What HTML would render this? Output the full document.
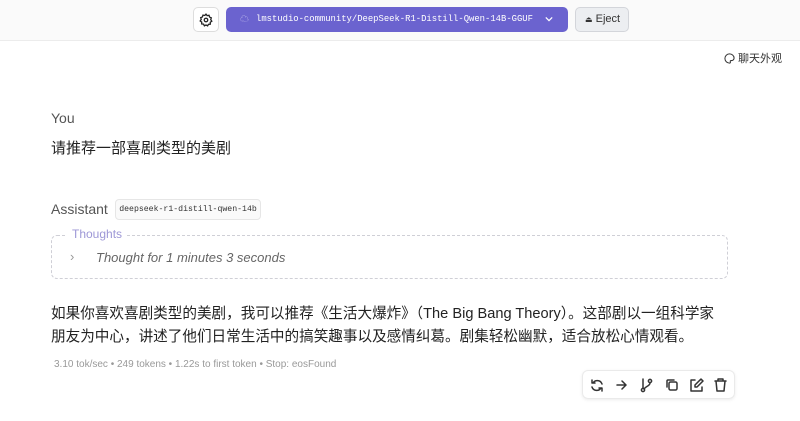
<!DOCTYPE html>
<html><head><meta charset="utf-8"><style>
body{margin:0;width:800px;height:421px;overflow:hidden;background:#fff;font-family:"Liberation Sans","Noto Sans CJK SC",sans-serif;position:relative;color:#222}
.top{position:absolute;left:0;top:0;width:800px;height:40px;background:#fafafa;border-bottom:1px solid #ececec}
.abs{position:absolute;white-space:nowrap}
.btn{position:absolute;border:1px solid #ddd;border-radius:5px;background:#fff;box-sizing:border-box}
.mono{font-family:"Liberation Mono","DejaVu Sans Mono",monospace}
</style></head><body>
<div class="top"></div>
<div class="btn" style="left:193px;top:7px;width:26px;height:25px;display:flex;align-items:center;justify-content:center">
<svg width="14" height="14" viewBox="0 0 24 24" fill="none" stroke="#222" stroke-width="2.2"><circle cx="12" cy="12" r="3"/><path d="M12 2l2 2.5 3.2-.6.9 3.1 3 1.3-1 3 1.9 2.7-2.7 1.9.1 3.2-3.2.3L14.8 22 12 20.5 9.2 22l-1.4-2.9-3.2-.3.1-3.2L2 13.7 3.9 11 2.9 8l3-1.3.9-3.1 3.2.6z"/></svg></div>
<div class="abs" style="left:226px;top:7px;width:342px;height:25px;background:#6b63cf;border-radius:5px;color:#fff;font-size:8.9px;line-height:25px" >
<span style="position:absolute;left:14px;top:0;font-size:9px;color:#c9c4f0">☁</span>
<span class="mono" style="position:absolute;left:30px">lmstudio-community/DeepSeek-R1-Distill-Qwen-14B-GGUF</span>
<svg class="abs" style="left:319px;top:9px" width="8" height="6" viewBox="0 0 10 6" fill="none" stroke="#fff" stroke-width="1.5"><path d="M1 1l4 4 4-4"/></svg>
</div>
<div class="btn" style="left:575px;top:7px;width:54px;height:25px;background:#eceef1;border-color:#d3d5da;font-size:11px;line-height:23px;color:#333;padding-left:9px"><span style="font-size:8px">⏏</span> Eject</div>
<div class="abs" style="left:724px;top:50px;font-size:11px;color:#333">
<svg style="vertical-align:-2px" width="11" height="11" viewBox="0 0 24 24" fill="none" stroke="#333" stroke-width="2.2"><path d="M12 2a10 10 0 100 20c1.5 0 2-1 2-2 0-1.5-1-2 0-3 1-1 3 0 5-1 2-1 3-3 3-5 0-5-4.5-9-10-9z"/></svg> 聊天外观</div>
<div class="abs" style="left:51px;top:110px;font-size:14px;color:#555">You</div>
<div class="abs" style="left:51px;top:137px;font-size:15px;color:#222">请推荐一部喜剧类型的美剧</div>
<div class="abs" style="left:51px;top:201px;font-size:14px;color:#555">Assistant</div>
<div class="abs mono" style="left:115px;top:199px;width:146px;height:21px;border:1px solid #e6e6e6;border-radius:4px;background:#fafafa;box-sizing:border-box;font-size:8.2px;line-height:19px;text-align:center;color:#333">deepseek-r1-distill-qwen-14b</div>
<div class="abs" style="left:51px;top:235px;width:677px;height:44px;border:1px dashed #cfcfd6;border-radius:6px;box-sizing:border-box"></div>
<div class="abs" style="left:67px;top:227px;padding:0 5px;background:#fff;font-size:12px;color:#9d97d6">Thoughts</div>
<div class="abs" style="left:70px;top:249px;font-size:13px;color:#999">›</div>
<div class="abs" style="left:96px;top:250px;font-size:13px;font-style:italic;color:#666">Thought for 1 minutes 3 seconds</div>
<div class="abs" style="left:51px;top:303px;width:672px;white-space:normal;font-size:14.6px;line-height:23px;color:#222">如果你喜欢喜剧类型的美剧，我可以推荐《生活大爆炸》（The Big Bang Theory）。这部剧以一组科学家<br>朋友为中心，讲述了他们日常生活中的搞笑趣事以及感情纠葛。剧集轻松幽默，适合放松心情观看。</div>
<div class="abs" style="left:54px;top:359px;font-size:10px;color:#999">3.10 tok/sec • 249 tokens • 1.22s to first token • Stop: eosFound</div>
<div class="abs" style="left:582px;top:370px;width:153px;height:29px;border:1px solid #eaeaea;border-radius:6px;box-shadow:0 1px 3px rgba(0,0,0,.08);box-sizing:border-box">
<svg width="153" height="29" viewBox="0 0 153 29" fill="none" stroke="#333" stroke-width="1.5" stroke-linecap="round" stroke-linejoin="round">
<g transform="translate(8,8)"><path d="M11 5a5 5 0 00-9-1M1 1v3h3M1 8a5 5 0 009 1M11 12V9H8"/></g>
<g transform="translate(32,8)"><path d="M2 6h9M7 2l4 4-4 4"/></g>
<g transform="translate(57,7)"><circle cx="3" cy="12" r="1.6"/><circle cx="10" cy="3" r="1.6"/><path d="M3 1v9M10 5c0 3-4 3-6 6"/></g>
<g transform="translate(82,7)"><rect x="4" y="4" width="8" height="8" rx="1.5"/><path d="M2 9V3a1 1 0 011-1h6"/></g>
<g transform="translate(106,7)"><path d="M6 2H2v11h11V9M12 1l2 2-6 6H6V7z"/></g>
<g transform="translate(131,7)"><path d="M1 3h11M4 3V1h5v2M2 3l1 10h7l1-10"/></g>
</svg></div>
</body></html>
